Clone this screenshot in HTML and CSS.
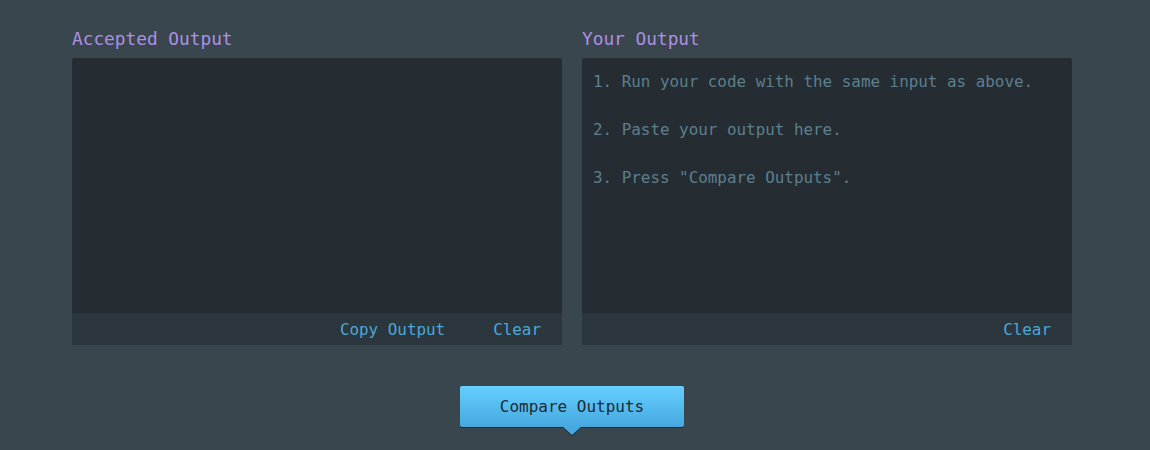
FILE: index.html
```html
<!DOCTYPE html>
<html>
<head>
<meta charset="utf-8">
<link rel="stylesheet" href="styles.css">
</head>
<body>
<div class="page">
  <div class="panels">
    <section class="panel">
      <h2 class="title">Accepted Output</h2>
      <div class="box">
        <div class="area"></div>
        <div class="bar">
          <a class="link">Copy Output</a>
          <a class="link">Clear</a>
        </div>
      </div>
    </section>
    <section class="panel">
      <h2 class="title">Your Output</h2>
      <div class="box">
        <div class="area placeholder">1. Run your code with the same input as above.

2. Paste your output here.

3. Press "Compare Outputs".</div>
        <div class="bar">
          <a class="link">Clear</a>
        </div>
      </div>
    </section>
  </div>
  <div class="actions">
    <button class="compare">Compare Outputs</button>
  </div>
</div>
</body>
</html>
```
FILE: styles.css
```css
html, body {
  margin: 0;
  padding: 0;
  background: #39464e;
  height: 100%;
}
body {
  font-family: "DejaVu Sans Mono", "Liberation Mono", monospace;
  color: #5f8494;
}
.page {
  padding: 27px 0 0 72px;
  width: 1000px;
}
.panels {
  display: flex;
  gap: 20px;
}
.panel {
  width: 490px;
}
.title {
  margin: 0 0 8px 0;
  font-weight: normal;
  font-size: 17.8px;
  line-height: 23px;
  color: #ae8fe3;
}
.box {
  display: flex;
  flex-direction: column;
}
.area {
  height: 255px;
  background: #252d33;
  box-sizing: border-box;
  padding: 12px 11px;
  font-size: 15.9px;
  line-height: 24px;
  white-space: pre;
  border-radius: 2px 2px 0 0;
}
.placeholder {
  color: #5d7f8e;
}
.bar {
  height: 32px;
  background: #2c373d;
  display: flex;
  justify-content: flex-end;
  align-items: center;
  gap: 48px;
  padding: 0 21px;
  font-size: 15.9px;
}
.link {
  color: #4aa7d8;
  cursor: pointer;
}
.actions {
  display: flex;
  justify-content: center;
  padding-top: 41px;
}
.compare {
  position: relative;
  width: 224px;
  height: 41px;
  border: none;
  border-radius: 2px;
  background: linear-gradient(#66cfff, #45a8df);
  box-shadow: 0 1px 0 #1a2329;
  font-family: "DejaVu Sans Mono", "Liberation Mono", monospace;
  font-size: 16px;
  color: #1c2a33;
  padding: 0;
}
.compare::after {
  content: "";
  position: absolute;
  left: 50%;
  bottom: -8px;
  margin-left: -9px;
  border-left: 9px solid transparent;
  border-right: 9px solid transparent;
  border-top: 8px solid #45a8df;
  filter: drop-shadow(0 1px 0 #1a2329);
}
```
